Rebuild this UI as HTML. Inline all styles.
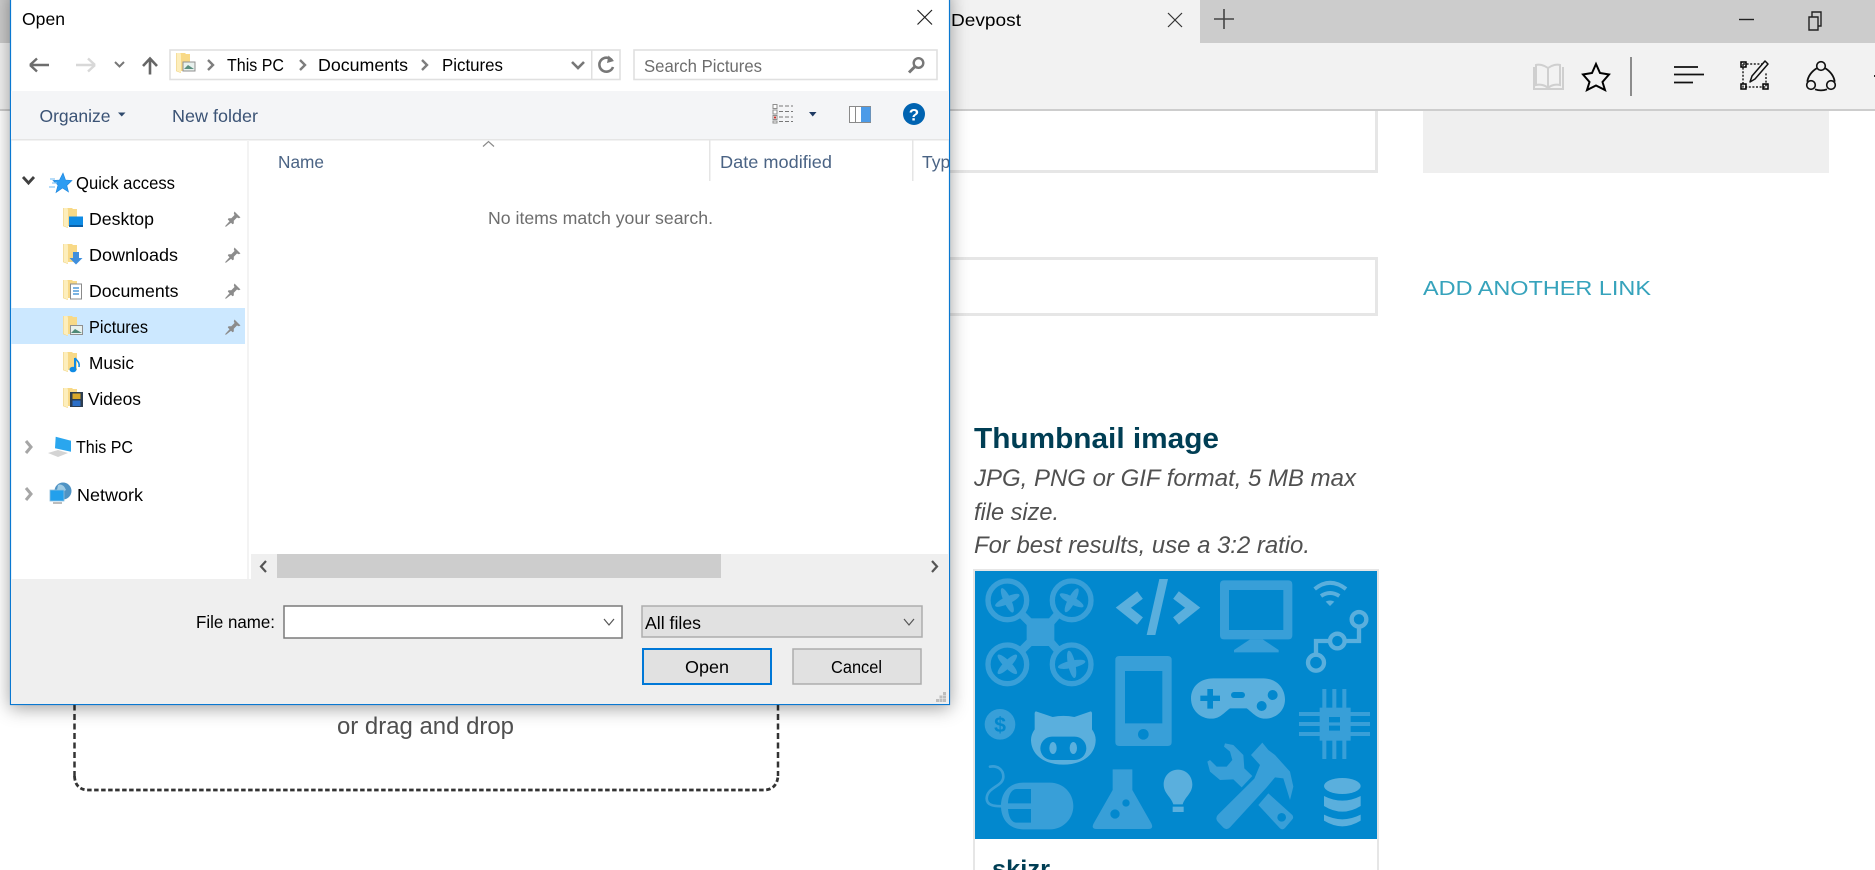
<!DOCTYPE html>
<html lang="en"><head><meta charset="utf-8"><title>Open</title>
<style>
html,body{margin:0;padding:0;background:#fff;width:1875px;height:870px;overflow:hidden}
svg{display:block;position:absolute;left:0;top:0}
text{font-family:"Liberation Sans",sans-serif;white-space:pre}
.d{font-size:17.5px;fill:#000}
.b{font-size:17.5px;fill:#3b5375}
.g{font-size:17.5px;fill:#6d6d6d}
</style></head><body>
<svg width="1875" height="870" viewBox="0 0 1875 870" xmlns="http://www.w3.org/2000/svg">
<defs>
<clipPath id="typ"><rect x="900" y="140" width="49" height="50"/></clipPath>
<symbol id="fold" viewBox="0 0 16 22" overflow="visible">
<path d="M0 0H9L10 1H14V18H5V20L0 18Z" fill="#f8d987"/>
<path d="M0 0H4.500L5 2V20L0 18Z" fill="#fdeebc"/>
<path d="M.4 17.800L5 19.800V20L0 18V0H.4Z" fill="#e9c76f"/>
</symbol>
<symbol id="pin" viewBox="0 0 16 16" overflow="visible">
<path d="M9.500 0.500L15.500 6.500L13.800 7.200L12 6.500L8.800 9.700L8.800 12.500L7.500 13.200L2.800 8.500L3.500 7.200L6.300 7.200L9.500 4L8.800 2.200Z" fill="#8c8c8c"/>
<path d="M5 10.500L0.500 15.500L5.800 11.300Z" fill="#8c8c8c" stroke="#8c8c8c"/>
</symbol>
</defs>

<!-- page -->
<rect width="1875" height="870" fill="#fff"/>
<path d="M900 171.500H1376.500V100" fill="none" stroke="#e6e6e6" stroke-width="3"/>
<rect x="900" y="258.500" width="476.500" height="56" fill="#fff" stroke="#e6e6e6" stroke-width="3"/>
<rect x="1423" y="100" width="406" height="73" fill="#efefef"/>
<text x="1423" y="295" font-size="20px" fill="#36a3bc" textLength="228" lengthAdjust="spacingAndGlyphs">ADD ANOTHER LINK</text>

<path d="M74.500 600V776" fill="none" stroke="#333" stroke-width="2.500" stroke-dasharray="6 3.500"/>
<path d="M778 600V776" fill="none" stroke="#333" stroke-width="2.500" stroke-dasharray="6 3.500"/>
<path d="M74.500 776Q75 789 87 790H765Q777 789 778 776" fill="none" stroke="#333" stroke-width="2.800" stroke-dasharray="4.500 2.500"/>
<text x="337" y="734" font-size="24px" fill="#505050" textLength="177" lengthAdjust="spacingAndGlyphs">or drag and drop</text>

<text x="974" y="448" font-size="28.800px" font-weight="700" fill="#003e54" textLength="245" lengthAdjust="spacingAndGlyphs">Thumbnail image</text>
<g font-size="24px" font-style="italic" fill="#505050">
<text x="974" y="486" textLength="382" lengthAdjust="spacingAndGlyphs">JPG, PNG or GIF format, 5 MB max</text>
<text x="974" y="520" textLength="85" lengthAdjust="spacingAndGlyphs">file size.</text>
<text x="974" y="553" textLength="336" lengthAdjust="spacingAndGlyphs">For best results, use a 3:2 ratio.</text>
</g>
<rect x="974" y="570" width="404" height="310" fill="#fff" stroke="#e6e6e6" stroke-width="2"/>
<text x="992" y="877" font-size="24px" font-weight="700" fill="#003e54" textLength="58" lengthAdjust="spacingAndGlyphs">skizr</text>

<!-- thumbnail artwork -->
<svg x="975" y="571" width="402" height="268" viewBox="45 483 1206 804">
<rect x="45" y="483" width="1206" height="804" fill="#0288ce"/>
<g fill="#389fd8" stroke="none">
 <!-- drone -->
 <g fill="none" stroke="#389fd8" stroke-width="16">
  <circle cx="142" cy="571" r="58"/><circle cx="335" cy="571" r="58"/><circle cx="142" cy="763" r="58"/><circle cx="335" cy="763" r="58"/>
 </g>
 <rect x="200" y="625" width="83" height="83"/>
 <path d="M184 612L214 642M294 612L268 642M184 722L214 692M294 722L268 692" stroke="#389fd8" stroke-width="24"/>
 <g transform="translate(142 571) rotate(-25)"><ellipse rx="40" ry="11"/><ellipse rx="11" ry="40"/></g>
 <g transform="translate(335 571) rotate(28)"><ellipse rx="40" ry="11"/><ellipse rx="11" ry="40"/></g>
 <g transform="translate(142 763) rotate(45)"><ellipse rx="40" ry="11"/><ellipse rx="11" ry="40"/></g>
 <g transform="translate(335 763) rotate(-12)"><ellipse rx="42" ry="11"/><ellipse rx="11" ry="42"/></g>
 <!-- monitor -->
 <path fill-rule="evenodd" d="M792 511H985Q997 511 997 523V676Q997 688 985 688H792Q780 688 780 676V523Q780 511 792 511ZM807 540V660H970V540Z"/>
 <path d="M870 688H908L956 720V727H822V720Z"/>
 <!-- phone -->
 <path fill-rule="evenodd" d="M478 738H623Q635 738 635 750V996Q635 1008 623 1008H478Q466 1008 466 996V750Q466 738 478 738ZM495 783V940H607V783ZM550 957A16 16 0 1 0 550 989A16 16 0 1 0 550 957Z"/>
 <!-- chip -->
 <path d="M1017 906H1230V918H1017ZM1017 936H1230V948H1017ZM1017 966H1230V978H1017ZM1087 837H1099V1047H1087ZM1117 837H1129V1047H1117ZM1147 837H1159V1047H1147Z"/>
 <rect x="1079" y="893" width="93" height="99"/>
 <path d="M1107 921H1140V937H1107ZM1107 947H1140V962H1107Z" fill="#0288ce"/>
 <!-- dollar -->
 <circle cx="120" cy="943" r="46"/>
 <text x="120" y="966" font-size="64px" font-weight="700" text-anchor="middle" fill="#0288ce">$</text>
 <!-- flask -->
 <path fill-rule="evenodd" d="M458 1078H517V1140L574 1240Q582 1257 565 1257H410Q392 1257 401 1240L458 1140ZM465 1198A14 14 0 1 0 465 1226A14 14 0 1 0 465 1198ZM498 1168A11 11 0 1 0 498 1190A11 11 0 1 0 498 1168Z"/>
 <!-- mouse -->
 <path fill-rule="evenodd" d="M190 1118H270C310 1118 340 1150 340 1188C340 1226 310 1258 270 1258H190C150 1258 123 1230 123 1188C123 1146 150 1118 190 1118ZM213 1137H170C155 1137 145 1155 144 1180H213ZM213 1197H144C146 1222 155 1238 170 1238H213Z"/>
 <path d="M90 1070C112 1066 130 1078 130 1100C130 1130 82 1130 80 1165C80 1186 102 1190 130 1188" fill="none" stroke="#389fd8" stroke-width="8" stroke-linecap="round"/>
 <!-- tools -->
 <g transform="translate(645 870)">
  <path d="M150 130L175 135L205 165L208 205L232 228L200 262L175 238L135 240L105 215L97 185L105 180L125 200L155 200L172 180L165 155L147 140Z"/>
  <path fill-rule="evenodd" d="M280 280L352 345Q357 352 352 358L330 384Q322 392 314 384L250 315ZM320 339A13 13 0 1 0 320 365A13 13 0 1 0 320 339Z"/>
  <path d="M262 128L228 165L255 195L238 236L128 345Q120 355 128 365L145 383Q155 392 165 382L275 262L300 232L325 235L345 300L355 260L345 215L300 165L280 150Z"/>
 </g>
</g>
<g fill="#5aafdd">
 <!-- code -->
 <path d="M540 555L490 593L540 633" fill="none" stroke="#5aafdd" stroke-width="28"/>
 <path d="M598 507H624L586 675H560Z"/>
 <path d="M648 555L698 593L648 633" fill="none" stroke="#5aafdd" stroke-width="28"/>
 <!-- wifi -->
 <path d="M1064 537Q1110 500 1158 537M1083 558Q1110 540 1138 558" fill="none" stroke="#5aafdd" stroke-width="12"/>
 <path d="M1097 575Q1110 568 1123 575L1110 588Z"/>
 <!-- connector -->
 <g fill="none" stroke="#5aafdd" stroke-width="13">
  <circle cx="1197" cy="628" r="22"/><circle cx="1132" cy="693" r="22"/><circle cx="1068" cy="758" r="24"/>
  <path d="M1197 650V693H1154M1110 693H1068V734"/>
 </g>
 <!-- gamepad -->
 <path d="M760 805H910C950 805 975 835 975 868C975 905 945 926 915 926C890 926 875 905 860 895H810C795 905 780 926 755 926C720 926 693 900 693 865C693 830 720 805 760 805Z"/>
 <g fill="#0288ce">
  <path d="M742 837H759V857H780V873H759V896H742V873H721V857H742Z"/>
  <rect x="813" y="846" width="42" height="18" rx="9"/>
  <circle cx="938" cy="855" r="15"/><circle cx="905" cy="888" r="15"/>
 </g>
 <!-- octocat -->
 <path d="M228 904L278 921Q310 914 343 921L392 904Q397 905 396 915V958Q408 975 407 992C405 1040 360 1064 310 1064C260 1064 215 1040 213 992Q212 975 224 958V915Q223 905 228 904Z"/>
 <rect x="241" y="980" width="138" height="70" rx="35" fill="#0288ce"/>
 <ellipse cx="279" cy="1014" rx="11" ry="18"/><ellipse cx="340" cy="1014" rx="11" ry="18"/>
 <!-- bulb -->
 <path d="M654 1079C680 1079 697 1100 697 1123C697 1150 675 1160 668 1183H640C633 1160 611 1150 611 1123C611 1100 628 1079 654 1079Z"/>
 <rect x="638" y="1190" width="33" height="16"/>
 <!-- database -->
 <ellipse cx="1147" cy="1128" rx="55" ry="24"/>
 <path d="M1092 1158Q1147 1186 1202 1158V1188Q1147 1222 1092 1188Z"/>
 <path d="M1092 1214Q1147 1242 1202 1214V1232Q1147 1266 1092 1232Z"/>
</g>
</svg>

<!-- browser chrome -->
<rect width="1875" height="43" fill="#cccccc"/>
<rect x="0" y="43" width="1875" height="66" fill="#f2f2f2"/>
<rect x="0" y="109" width="1875" height="2" fill="#cdcdcd"/>
<rect x="950" y="0" width="250" height="43" fill="#f2f2f2"/>
<text x="951" y="26" font-size="17.500px" fill="#000" textLength="70" lengthAdjust="spacingAndGlyphs">Devpost</text>
<path d="M1168 13L1182 27M1182 13L1168 27" stroke="#333" stroke-width="1.200" fill="none"/>
<path d="M1224 9V29M1214 19H1234" stroke="#444" stroke-width="1.600" fill="none"/>
<path d="M1739 19.500H1754" stroke="#222" stroke-width="1.400"/>
<path d="M1809 17H1818V30H1809ZM1812 17V12H1821V26H1818" fill="none" stroke="#222" stroke-width="1.400"/>
<!-- reading -->
<path d="M1548 68C1544 65 1539 64 1536 65V85C1540 84 1545 85 1548 88C1551 85 1556 84 1560 85V65C1557 64 1552 65 1548 68ZM1548 68V88M1534 67V89H1563V67" fill="none" stroke="#cfcfcf" stroke-width="2"/>
<!-- star -->
<path d="M1596 64L1600 73L1609 74.500L1602.500 82L1605 90L1596 85.500L1587 90L1589.500 82L1583 74.500L1592 73Z" fill="none" stroke="#000" stroke-width="2"/>
<rect x="1630" y="57" width="2" height="39" fill="#8c8c8c"/>
<!-- hub -->
<path d="M1674 67H1698M1674 74.500H1704M1674 82.500H1693" stroke="#111" stroke-width="1.800" fill="none"/>
<!-- note -->
<path d="M1743 64H1762M1743 64V87H1766V72" fill="none" stroke="#222" stroke-width="1.500" stroke-dasharray="2 1.600"/>
<path d="M1741 62h5v5h-5zM1741 84h5v5h-5zM1763 84h5v5h-5z" fill="none" stroke="#000" stroke-width="1.500"/>
<path d="M1765 61L1768 64L1755 79L1750 82L1752 76Z" fill="#f2f2f2" stroke="#111" stroke-width="1.500" stroke-linejoin="round"/>
<!-- share -->
<path d="M1816.700 68.300C1811 72 1808 77 1807.300 81.700M1825.300 68.300C1831 72 1834 77 1834.700 81.700M1815 89.300Q1821 91.500 1827 89.300" fill="none" stroke="#111" stroke-width="1.800"/>
<circle cx="1821" cy="66" r="4.300" fill="none" stroke="#111" stroke-width="1.600"/>
<circle cx="1811" cy="85" r="4.300" fill="none" stroke="#111" stroke-width="1.600"/>
<circle cx="1831" cy="85" r="4.300" fill="none" stroke="#111" stroke-width="1.600"/>
<rect x="1874" y="75" width="1" height="2" fill="#222"/>

<!-- dialog -->
<rect x="10.500" y="-10" width="939" height="714.500" fill="#fff" stroke="#0a78d1" stroke-width="1.200" style="filter:drop-shadow(0 3px 9px rgba(0,0,0,.38))"/>
<text x="22" y="25" class="d" textLength="43" lengthAdjust="spacingAndGlyphs">Open</text>
<path d="M917.500 10L932 24.500M932 10L917.500 24.500" stroke="#222" stroke-width="1.200" fill="none"/>

<!-- nav row -->
<path d="M49 65H30M30 65L37 58.500M30 65L37 71.500" fill="none" stroke="#6d6d6d" stroke-width="2.400"/>
<path d="M76 65H95M95 65L88 58.500M95 65L88 71.500" fill="none" stroke="#d8d8d8" stroke-width="2.400"/>
<path d="M115 62L119.500 66.500L124 62" fill="none" stroke="#777" stroke-width="2"/>
<path d="M150 74.500V59M143 66L150 58.500L157 66" fill="none" stroke="#666" stroke-width="2.600"/>
<rect x="170" y="50" width="450" height="29.500" fill="#fff" stroke="#e0e0e0" stroke-width="1.600"/>
<rect x="591" y="50" width="1.500" height="30" fill="#e0e0e0"/>
<use href="#fold" x="176" y="53" width="16" height="22"/>
<rect x="183" y="62" width="12" height="9" fill="#e8f1ee" stroke="#8f8f8f"/><path d="M184 69L188 65L194 69Z" fill="#5a8f80"/>
<path d="M208 60L213 65L208 70M300 60L305 65L300 70M422 60L427 65L422 70" fill="none" stroke="#7d7d7d" stroke-width="2.400"/>
<text x="227" y="71" class="d" textLength="57" lengthAdjust="spacingAndGlyphs">This PC</text>
<text x="318" y="71" class="d" textLength="90" lengthAdjust="spacingAndGlyphs">Documents</text>
<text x="442" y="71" class="d" textLength="61" lengthAdjust="spacingAndGlyphs">Pictures</text>
<path d="M572 62L578 68L584 62" fill="none" stroke="#777" stroke-width="2.600"/>
<path d="M612 60.500A7 7 0 1 0 613 67" fill="none" stroke="#787878" stroke-width="2.600"/><path d="M608.500 55.500L614 61L607 63Z" fill="#787878"/>
<rect x="634" y="50" width="303" height="29.500" fill="#fff" stroke="#e0e0e0" stroke-width="1.600"/>
<text x="644" y="72" class="g" textLength="118" lengthAdjust="spacingAndGlyphs">Search Pictures</text>
<circle cx="918.500" cy="63" r="4.800" fill="none" stroke="#777" stroke-width="2.400"/><path d="M914.500 67L909 72.500" stroke="#777" stroke-width="3"/>

<!-- toolbar -->
<rect x="11" y="91" width="938" height="48" fill="#f4f5f7"/>
<rect x="11" y="139" width="938" height="1.500" fill="#e5e5e5"/>
<text x="39.500" y="122" class="b" textLength="71" lengthAdjust="spacingAndGlyphs">Organize</text>
<path d="M118 112.500H125.500L121.750 116.500Z" fill="#2f4a6d"/>
<text x="172" y="122" class="b" textLength="86" lengthAdjust="spacingAndGlyphs">New folder</text>
<g fill="#fff" stroke="#8e8e8e"><rect x="773" y="104.500" width="4" height="4"/><rect x="773" y="110" width="4" height="4"/><rect x="773" y="115.500" width="4" height="4"/><rect x="773" y="121" width="4" height="2"/></g>
<rect x="774" y="116.500" width="2" height="2" fill="#c8312a"/>
<path d="M779 106H783M785 106H789M779 111.500H783M785 111.500H789M779 117H783M785 117H789M779 121.500H783M785 121.500H789" stroke="#777" stroke-width="1"/><path d="M791 106H793M791 111.500H793M791 117H793M791 121.500H793" stroke="#777"/>
<path d="M809 112H816.500L812.750 116.500Z" fill="#1e3a63"/>
<rect x="849.500" y="106.500" width="21" height="16" fill="#fff" stroke="#8a8a8a"/>
<rect x="861" y="107" width="9.500" height="15" fill="#4c9be8"/><rect x="855" y="107" width="1" height="15" fill="#8a8a8a"/>
<circle cx="914" cy="114" r="11" fill="#0063b1"/>
<text x="914" y="120.500" font-size="17px" font-weight="700" text-anchor="middle" fill="#fff">?</text>

<!-- left nav pane -->
<rect x="247" y="140" width="2" height="439" fill="#f3f3f3"/>
<rect x="11" y="308" width="234" height="36" fill="#cce8ff"/>
<path d="M23 177L28.500 183L34 177" fill="none" stroke="#404040" stroke-width="2.800"/>
<path d="M63 173L65.500 180L72 180.500L66.800 185.500L68.500 192L62.500 188L56 192.500L58 185L53 180.500L59.500 180Z" fill="#2d9cf2" stroke="#1b84dc" stroke-width=".6"/>
<path d="M50 179H55M52 183H57M49 187H55" stroke="#8ac8f5" stroke-width="1.200"/>
<text x="76" y="189" class="d" textLength="99" lengthAdjust="spacingAndGlyphs">Quick access</text>

<use href="#fold" x="63" y="208" width="16" height="22"/>
<rect x="69" y="216.500" width="14" height="10" fill="#0f8be4"/><rect x="69" y="225" width="14" height="2" fill="#0a5fa8"/>
<text x="89" y="225" class="d" textLength="65" lengthAdjust="spacingAndGlyphs">Desktop</text>
<use href="#pin" x="225" y="211" width="16" height="16"/>

<use href="#fold" x="63" y="244" width="16" height="22"/>
<path d="M73 252H79V258H82.500L76 264.500L69.500 258H73Z" fill="#3f8fdd"/>
<text x="89" y="261" class="d" textLength="89" lengthAdjust="spacingAndGlyphs">Downloads</text>
<use href="#pin" x="225" y="247" width="16" height="16"/>

<use href="#fold" x="63" y="280" width="16" height="22"/>
<rect x="70.500" y="284" width="11" height="15" fill="#fff" stroke="#8a8a8a"/><path d="M73 288H79M73 291H79M73 294H79" stroke="#2e86d0" stroke-width="1.200"/>
<text x="89" y="297" class="d" textLength="89.500" lengthAdjust="spacingAndGlyphs">Documents</text>
<use href="#pin" x="225" y="283" width="16" height="16"/>

<use href="#fold" x="63" y="316" width="16" height="22"/>
<rect x="70.500" y="325.500" width="12" height="9" fill="#e8f1ee" stroke="#8f8f8f"/><path d="M71 333L75 329L82 333Z" fill="#4f8a78"/>
<text x="89" y="333" class="d" textLength="59" lengthAdjust="spacingAndGlyphs">Pictures</text>
<use href="#pin" x="225" y="319" width="16" height="16"/>

<use href="#fold" x="63" y="352" width="16" height="22"/>
<path d="M75 358V369" stroke="#0f8be4" stroke-width="2"/><ellipse cx="73" cy="369.500" rx="3.500" ry="2.800" fill="#0f8be4"/><path d="M75 358C77 361 80 362 79 367" fill="none" stroke="#0f8be4" stroke-width="1.600"/>
<text x="89" y="369" class="d" textLength="45" lengthAdjust="spacingAndGlyphs">Music</text>

<use href="#fold" x="63" y="388" width="16" height="22"/>
<rect x="70" y="392" width="13" height="15" fill="#2c3d50"/><rect x="72.500" y="393.500" width="8" height="5.500" fill="#d7a72c"/><rect x="72.500" y="400.500" width="8" height="5.500" fill="#2b6fc8"/>
<text x="88" y="405" class="d" textLength="53" lengthAdjust="spacingAndGlyphs">Videos</text>

<path d="M26 441L31 447L26 453" fill="none" stroke="#a6a6a6" stroke-width="3"/>
<path d="M55.700 436.700L71 440.700V451.700L55 448.300Z" fill="#2aa6ee"/><path d="M48 453L58 450L68 453L58 457Z" fill="#d4d4d4"/>
<text x="76" y="453" class="d" textLength="57" lengthAdjust="spacingAndGlyphs">This PC</text>

<path d="M26 488L31 494L26 500" fill="none" stroke="#a6a6a6" stroke-width="3"/>
<circle cx="63" cy="491" r="8.500" fill="#4f93c4"/><path d="M58 485Q63 483 66 490Q60 494 57 490Z" fill="#9fcbe4"/>
<rect x="50" y="490" width="14" height="11" fill="#23a0ec" stroke="#8ebfdc" stroke-width=".8"/><rect x="53" y="502" width="9" height="2" fill="#bdbdbd"/>
<text x="77" y="501" class="d" textLength="66" lengthAdjust="spacingAndGlyphs">Network</text>

<!-- file list header -->
<text x="278" y="168" class="b" style="fill:#4a6384" textLength="46" lengthAdjust="spacingAndGlyphs">Name</text>
<path d="M483 146.500L488.500 141.500L494 146.500" fill="none" stroke="#8a8a8a" stroke-width="1.200"/>
<rect x="709" y="140" width="1.500" height="41" fill="#e5e5e5"/>
<text x="720" y="168" class="b" style="fill:#4a6384" textLength="112" lengthAdjust="spacingAndGlyphs">Date modified</text>
<rect x="912" y="140" width="1.500" height="41" fill="#e5e5e5"/>
<text x="922" y="168" class="b" style="fill:#4a6384" clip-path="url(#typ)">Type</text>
<text x="488" y="224" class="g" textLength="225" lengthAdjust="spacingAndGlyphs">No items match your search.</text>

<!-- h scrollbar -->
<rect x="251" y="554" width="698" height="25" fill="#efefef"/>
<rect x="277" y="554" width="444" height="24" fill="#cdcdcd"/>
<path d="M266 561L261 566.500L266 572M932 561L937 566.500L932 572" fill="none" stroke="#555" stroke-width="2.200"/>

<!-- bottom panel -->
<rect x="11" y="579" width="938" height="125" fill="#efefef"/>
<text x="196" y="628" class="d" textLength="79" lengthAdjust="spacingAndGlyphs">File name:</text>
<rect x="284" y="606" width="338" height="32" fill="#fff" stroke="#7a7a7a" stroke-width="1.500"/>
<path d="M604 619L609 625L614 619" fill="none" stroke="#555" stroke-width="1.200"/>
<rect x="642" y="606" width="280" height="31" fill="#e1e1e1" stroke="#adadad" stroke-width="1.500"/>
<text x="645" y="629" class="d" textLength="56" lengthAdjust="spacingAndGlyphs">All files</text>
<path d="M904 619L909 625L914 619" fill="none" stroke="#555" stroke-width="1.200"/>
<rect x="643" y="649" width="128" height="35" fill="#e1e1e1" stroke="#0078d7" stroke-width="2"/>
<text x="685" y="673" class="d" textLength="44" lengthAdjust="spacingAndGlyphs">Open</text>
<rect x="793" y="649" width="128" height="35" fill="#e1e1e1" stroke="#adadad" stroke-width="1.500"/>
<text x="831" y="673" class="d" textLength="51" lengthAdjust="spacingAndGlyphs">Cancel</text>
<path d="M943 692h3v3h-3zM939.500 695.500h3v3h-3zM943 695.500h3v3h-3zM936 699h3v3h-3zM939.500 699h3v3h-3zM943 699h3v3h-3z" fill="#bdbdbd"/>
</svg>
</body></html>
